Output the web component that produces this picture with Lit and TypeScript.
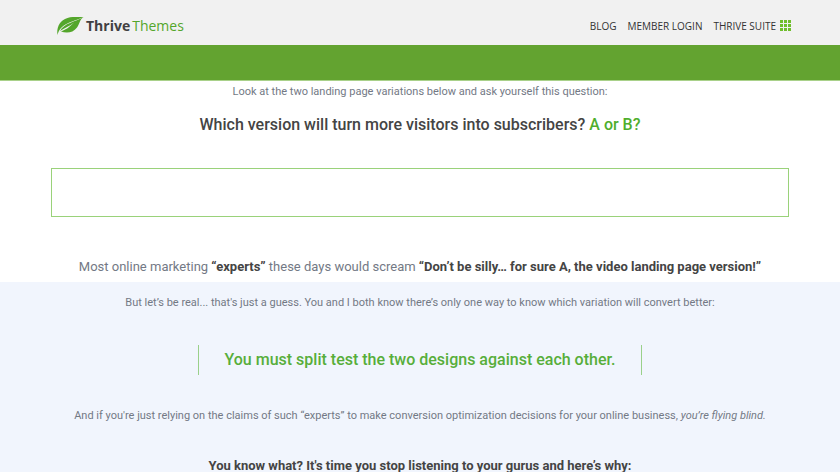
import { LitElement, html, css } from "lit";
import { customElement } from "lit/decorators.js";

const dots = [0, 4, 8].flatMap((y) => [0, 4, 8].map((x) => `M${x} ${y}h3v3h-3z`)).join("");

@customElement("app-root")
export class AppRoot extends LitElement {
  static styles = css`
    :host { display: block; font-family: Roboto, sans-serif; color: #737985; background: #fff; }
    * { box-sizing: border-box; }
    h2, h3, p { margin: 0; font-weight: 400; text-align: center; }
    header { display: flex; align-items: center; justify-content: space-between; height: 45px; padding: 6px 49px 0 56px; background: #f1f1f1; }
    .logo { display: flex; align-items: center; gap: 2px; text-decoration: none; font: 14px/20px "Open Sans", sans-serif; color: #54a62b; }
    .logo b { color: #414042; }
    .leaf { width: 28px; height: 20px; }
    nav { display: flex; align-items: center; gap: 11px; }
    nav a { display: flex; align-items: center; gap: 4px; color: #333; text-decoration: none; font: 10px/16px "Open Sans", sans-serif; }
    .grid { width: 11px; height: 11px; }
    .band { height: 36px; background: #63a330; border-bottom: 1px solid #a9d18a; }
    .column { padding: 0 51px; }
    .small { font-size: 11px; line-height: 22px; }
    .question { font-size: 16px; line-height: 24px; font-weight: 500; color: #444; margin-top: 10px; }
    .green { color: #4fae2c; }
    .frame { height: 49px; margin-top: 31px; border: 1px solid #9ad27a; }
    .experts { font-size: 13px; line-height: 24px; padding: 38px 0 3px; }
    b { color: #444; }
    .guess { background: #f1f5fd; padding-top: 10px; }
    .callout { width: fit-content; margin: 31px auto 30px; padding: 0 26px; border: solid #9ad08a; border-width: 0 1px; font-size: 16px; line-height: 30px; font-weight: 500; color: #57ae3a; }
    .why { font-size: 13px; line-height: 20px; margin-top: 29px; }
  `;

  render() {
    return html`
      <header>
        <a class="logo" href="#">
          <svg class="leaf" viewBox="0 0 28 20">
            <path fill="#54a62b" d="M1.500 19C.500 12 3 6 9 3C15 0 21 1.500 27.500 1C22 4 10 6 5 12C3 14.500 2 16.500 1.500 19z"/>
            <path fill="#54a62b" d="M27.500 1C24 3 23.500 8 21 11.500C17 17 10.500 17.500 5 15.500C9 14 14 11 18 6.500C14 10 8 12 4 15C8 7 19 6 27.500 1z"/>
          </svg>
          <b>Thrive</b><span>Themes</span>
        </a>
        <nav>
          <a href="#">BLOG</a><a href="#">MEMBER LOGIN</a>
          <a href="#">THRIVE SUITE<svg class="grid" viewBox="0 0 11 11"><path fill="#6fbe2c" d=${dots} /></svg></a>
        </nav>
      </header>
      <div class="band"></div>
      <main>
        <section class="column">
          <p class="small">Look at the two landing page variations below and ask yourself this question:</p>
          <h2 class="question">Which version will turn more visitors into subscribers? <span class="green">A or B?</span></h2>
          <div class="frame"></div>
          <p class="experts">Most online marketing <b>“experts”</b> these days would scream <b>“Don’t be silly… for sure A, the video landing page version!”</b></p>
        </section>
        <section class="column guess">
          <p class="small">But let’s be real... that's just a guess. You and I both know there’s only one way to know which variation will convert better:</p>
          <h2 class="callout">You must split test the two designs against each other.</h2>
          <p class="small">And if you're just relying on the claims of such “experts” to make conversion optimization decisions for your online business, <i>you’re flying blind.</i></p>
          <h3 class="why"><b>You know what? It's time you stop listening to your gurus and here’s why:</b></h3>
        </section>
      </main>
    `;
  }
}
